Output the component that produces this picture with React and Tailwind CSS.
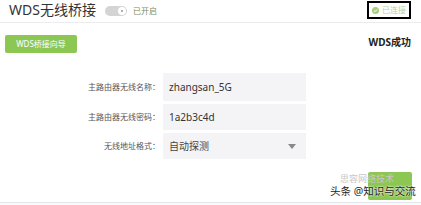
import React from 'react';

const font = { fontFamily: '"Noto Sans", "Noto Sans CJK SC", sans-serif' };

const Field = ({ label, children, h }) => (
    <div className="flex items-center">
        <div className="w-[163px] pr-[3px] text-right text-[8px] text-[#555] whitespace-nowrap">{label}</div>
        <div className={`w-[143px] ${h} bg-[#f4f4f6] flex items-center pl-[6px] pr-[10px] text-[10px] text-[#333]`}>
            {children}
        </div>
    </div>
);

const App = () => {
    return (
        <div className="w-[421px] h-[205px] bg-white relative overflow-hidden flex flex-col" style={font}>
            {/* header */}
            <div className="h-[23px] border-b border-[#ececec] flex items-center pl-[9px] pr-[10px]">
                <span className="text-[14px] leading-none text-[#333] mt-[-2px]">WDS无线桥接</span>
                <div className="ml-[9px] w-[22px] h-[10px] rounded-full bg-[#d4d4d4] flex items-center justify-end pr-[1px]">
                    <div className="w-[8px] h-[8px] rounded-full bg-white flex items-center justify-center">
                        <div className="w-[2px] h-[2px] rounded-full bg-[#999]" />
                    </div>
                </div>
                <span className="ml-[6px] text-[8px] text-[#7d8a5e]">已开启</span>
                <div className="ml-auto mt-[-2px] w-[44px] h-[18px] border-2 border-black flex items-center justify-center gap-[3px]">
                    <svg width="7" height="7" viewBox="0 0 10 10">
                        <circle cx="5" cy="5" r="5" fill="#a5cf78" />
                        <path d="M2.8 5.1 L4.4 6.6 L7.3 3.6" stroke="white" strokeWidth="1.4" fill="none" />
                    </svg>
                    <span className="text-[8px] text-[#b6d497]">已连接</span>
                </div>
            </div>

            {/* wizard row */}
            <div className="flex items-start mt-[12px] pl-[5px] pr-[10px]">
                <button className="w-[72px] h-[18px] bg-[#8cc653] rounded-[2px] text-white text-[8px] flex items-center justify-center">
                    WDS桥接向导
                </button>
                <span className="ml-auto text-[10px] font-bold text-[#222]">WDS成功</span>
            </div>

            {/* form */}
            <div className="mt-[20px] flex flex-col gap-[3px]">
                <Field label="主路由器无线名称：" h="h-[28px]">zhangsan_5G</Field>
                <Field label="主路由器无线密码：" h="h-[26px]">1a2b3c4d</Field>
                <Field label="无线地址格式：" h="h-[26px]">
                    <span className="text-[10px] text-[#444]">自动探测</span>
                    <svg className="ml-auto" width="8" height="5" viewBox="0 0 8 5">
                        <path d="M0 0 L8 0 L4 5 Z" fill="#888" />
                    </svg>
                </Field>
            </div>

            {/* footer */}
            <div className="mt-auto h-[3px] border-t border-[#e4e8ee] bg-[#f7f9fb]" />

            {/* save button + watermark overlay */}
            <div className="absolute left-[368px] top-[172px] w-[44px] h-[28px] bg-[#8cc653] rounded-[2px]" />
            <div className="absolute left-[340px] top-[174px] text-[9px] leading-none text-[#c8c8c8] whitespace-nowrap">思容网络技术</div>
            <div className="absolute left-[330px] top-[186px] text-[10.5px] leading-none text-[#222] whitespace-nowrap [text-shadow:0_0_2px_white,0_0_2px_white]">
                头条 @知识与交流
            </div>
        </div>
    );
};

export default App;
